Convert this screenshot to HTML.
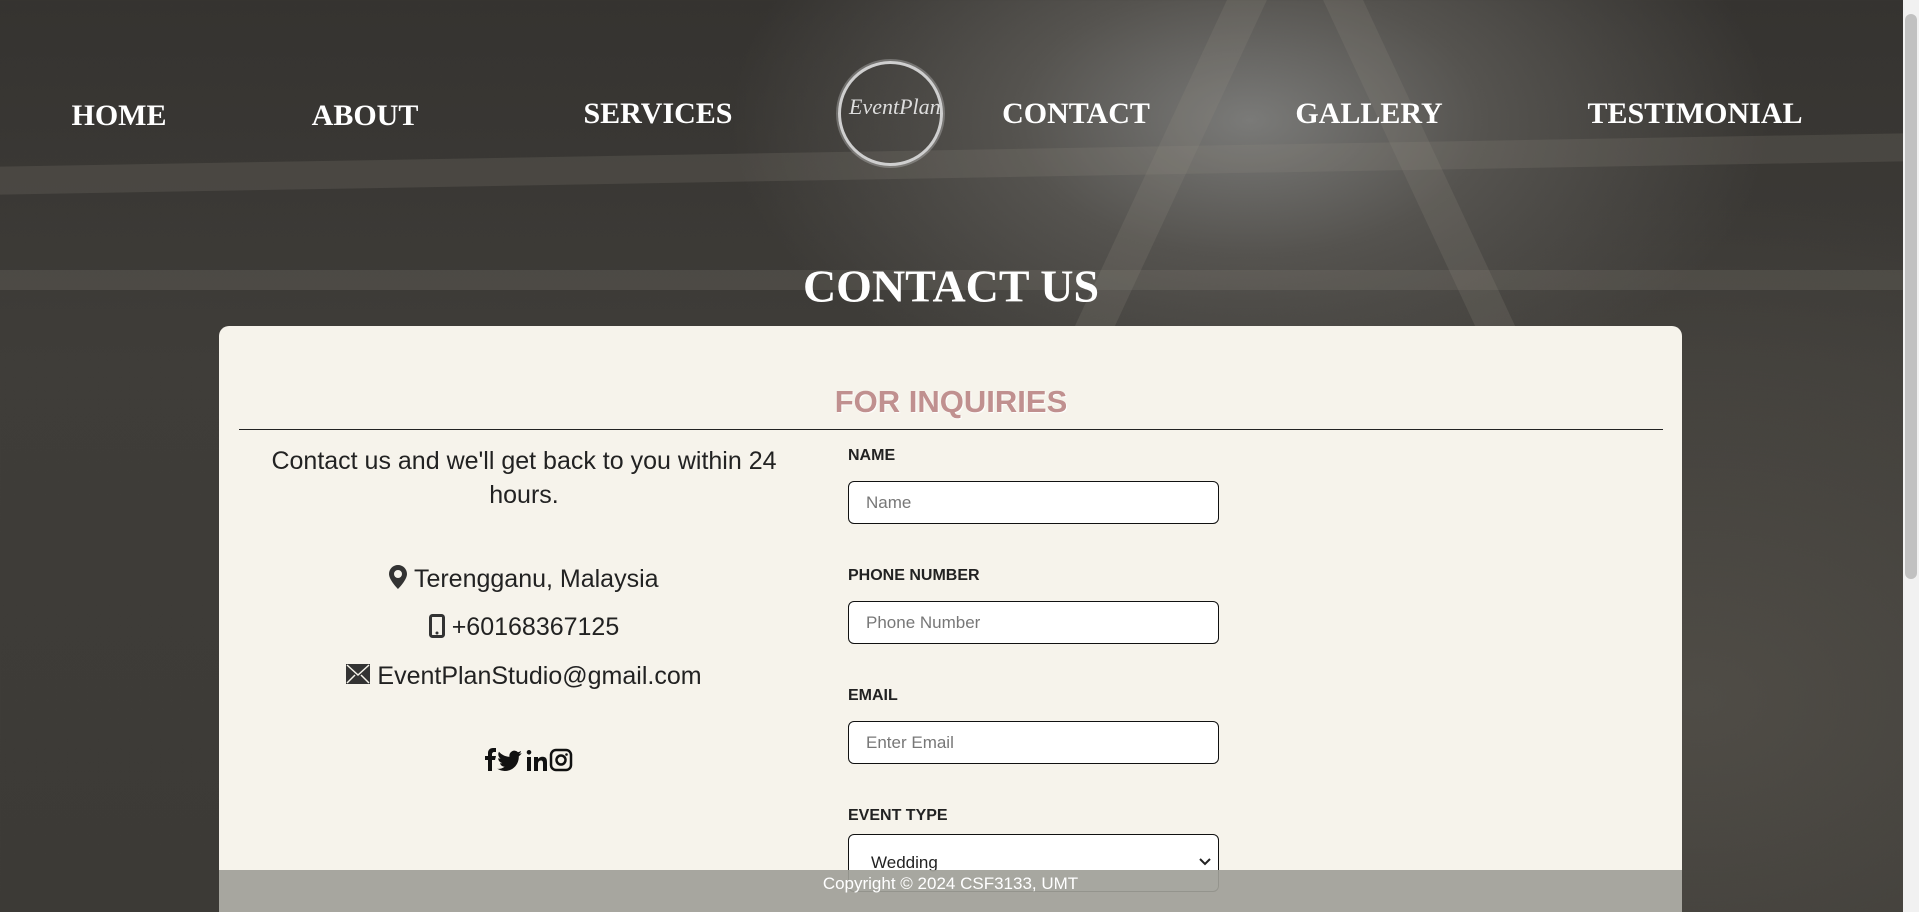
<!DOCTYPE html>
<html><head><meta charset="utf-8"><style>
*{box-sizing:border-box;margin:0;padding:0}
html,body{width:1919px;height:912px;overflow:hidden}
body{position:relative;font-family:"Liberation Sans",sans-serif;
background:
radial-gradient(ellipse 520px 300px at 1250px 120px,#7a7a78 0%,#55534f 45%,rgba(60,58,54,0) 100%),
radial-gradient(ellipse 700px 500px at 1700px 700px,#4f4c46 0%,rgba(0,0,0,0) 100%),
linear-gradient(180deg,#353330 0%,#3f3d39 40%,#3c3a36 100%);}
.beam{position:absolute;background:rgba(150,145,135,.18)}
.nav{position:absolute;font-family:"Liberation Serif",serif;font-weight:bold;font-size:30px;color:#fff;transform:translate(-50%,-50%);white-space:nowrap}
.logo{position:absolute;left:838px;top:61px;width:105px;height:105px;border-radius:50%;border:3px solid #cfcfcf;box-shadow:0 0 0 2px rgba(200,200,200,.35)}
.logo span{position:absolute;left:8px;top:30px;font-family:"Liberation Serif",serif;font-style:italic;font-size:22px;color:#ddd}
h1{position:absolute;left:951px;top:286px;transform:translate(-50%,-50%);font-family:"Liberation Serif",serif;font-size:46px;color:#fff;white-space:nowrap}
.card{position:absolute;left:219px;top:326px;width:1463px;height:600px;background:#f6f3eb;border-radius:10px}
.inq{position:absolute;left:951px;top:402px;transform:translate(-50%,-50%);font-size:31px;font-weight:bold;color:#c0908f;text-shadow:1px 1px 1px #fff;white-space:nowrap}
.hr{position:absolute;left:239px;top:429px;width:1424px;height:1px;background:#222}
.lt{position:absolute;left:239px;width:570px;text-align:center;font-size:25px;color:#222;line-height:34px}
.lbl{position:absolute;left:848px;font-size:16px;font-weight:bold;color:#222}
.in{position:absolute;left:848px;width:371px;height:43px;border:1px solid #111;border-radius:6px;background:#fff;font-size:17px;color:#777;padding:10px 17px;line-height:22px}
.foot{position:absolute;left:219px;top:870px;width:1463px;height:42px;background:rgba(160,160,152,.92);color:#fff;font-size:17px;text-align:center;line-height:28px}
.sb{position:absolute;right:0;top:0;width:16px;height:912px;background:#f1f1f1}
.th{position:absolute;right:2px;top:14px;width:12px;height:565px;background:#c1c1c1;border-radius:6px}
</style></head><body>
<div class="beam" style="left:0;top:150px;width:1903px;height:28px;transform:skewY(-1deg)"></div>
<div class="beam" style="left:0;top:270px;width:1903px;height:20px"></div>
<div class="beam" style="left:1150px;top:0;width:40px;height:330px;transform:skewX(-25deg)"></div>
<div class="beam" style="left:1400px;top:0;width:40px;height:330px;transform:skewX(25deg)"></div>
<div class="nav" style="left:119px;top:116px">HOME</div>
<div class="nav" style="left:365px;top:116px">ABOUT</div>
<div class="nav" style="left:658px;top:114px">SERVICES</div>
<div class="logo"><span>EventPlan</span></div>
<div class="nav" style="left:1076px;top:114px">CONTACT</div>
<div class="nav" style="left:1369px;top:114px">GALLERY</div>
<div class="nav" style="left:1695px;top:114px">TESTIMONIAL</div>
<h1>CONTACT US</h1>
<div class="card"></div>
<div class="inq">FOR INQUIRIES</div>
<div class="hr"></div>
<div class="lt" style="top:444px;font-size:25px">Contact us and we'll get back to you within 24<br>hours.</div>
<div class="lt" style="top:562px"><svg width="18" height="24" viewBox="0 0 18 24" style="vertical-align:-2px"><path d="M9 0C4 0 0 4 0 9c0 6 9 15 9 15s9-9 9-15C18 4 14 0 9 0zm0 13a4 4 0 110-8 4 4 0 010 8z" fill="#333"/></svg> Terengganu, Malaysia</div>
<div class="lt" style="top:610px"><svg width="16" height="24" viewBox="0 0 16 24" style="vertical-align:-3px"><rect x="1.5" y="1.5" width="13" height="21" rx="2" fill="none" stroke="#333" stroke-width="3"/><circle cx="8" cy="19" r="1.5" fill="#333"/></svg> +60168367125</div>
<div class="lt" style="top:659px"><svg width="24" height="20" viewBox="0 0 24 20" style="vertical-align:0"><rect x="0" y="0" width="24" height="20" fill="#333"/><path d="M1 1l11 10L23 1M1 19l8-8M23 19l-8-8" stroke="#f6f3eb" stroke-width="1.5" fill="none"/></svg> EventPlanStudio@gmail.com</div>
<div class="lt" style="top:747px;font-weight:bold;color:#111">
<svg width="100" height="26" viewBox="0 0 100 26"><path d="M14 24V13h-3V9h3V6c0-3 2-5 5-5h3v4h-2c-1 0-2 1-2 2v2h4l-1 4h-3v11z" fill="#111"/><path d="M48 6c-1 .5-2 .7-3 .8 1-.6 2-1.6 2-2.8-1 .6-2 1-3 1.2a5 5 0 00-8.5 4.5c-4 0-8-2-10.5-5-1.5 2.5-.5 5.5 1.5 7-.8 0-1.6-.3-2.3-.6 0 2.4 1.7 4.4 4 5-.7.2-1.5.2-2.2.1.6 2 2.5 3.4 4.6 3.5-2 1.6-4.7 2.4-7.3 2.1 2.2 1.4 4.8 2.2 7.5 2.2 9 0 14-7.5 14-14v-.6c1-.7 1.8-1.6 2.5-2.6z" fill="#111"/><path d="M53 10h4v14h-4zM55 3a2.3 2.3 0 110 4.6A2.3 2.3 0 0155 3zM60 10h4v2c1-1.5 2.5-2.3 4.5-2.3 4 0 4.5 2.6 4.5 6V24h-4v-7c0-1.6 0-3.5-2-3.5s-3 1.5-3 3.5v7h-4z" fill="#111"/><rect x="77" y="3" width="20" height="20" rx="5" fill="none" stroke="#111" stroke-width="2.5"/><circle cx="87" cy="13" r="4.5" fill="none" stroke="#111" stroke-width="2.5"/><circle cx="92.5" cy="7.5" r="1.3" fill="#111"/></svg></div>
<div class="lbl" style="top:447px">NAME</div>
<div class="in" style="top:481px">Name</div>
<div class="lbl" style="top:567px">PHONE NUMBER</div>
<div class="in" style="top:601px">Phone Number</div>
<div class="lbl" style="top:687px">EMAIL</div>
<div class="in" style="top:721px">Enter Email</div>
<div class="lbl" style="top:807px">EVENT TYPE</div>
<div class="in" style="top:834px;height:58px;color:#222;padding:17px 22px">Wedding<svg width="14" height="10" viewBox="0 0 14 10" style="position:absolute;right:6px;top:22px"><path d="M2 2l5 5 5-5" stroke="#222" stroke-width="2" fill="none"/></svg></div>
<div class="foot">Copyright © 2024 CSF3133, UMT</div>
<div class="sb"><div class="th"></div></div>
</body></html>
